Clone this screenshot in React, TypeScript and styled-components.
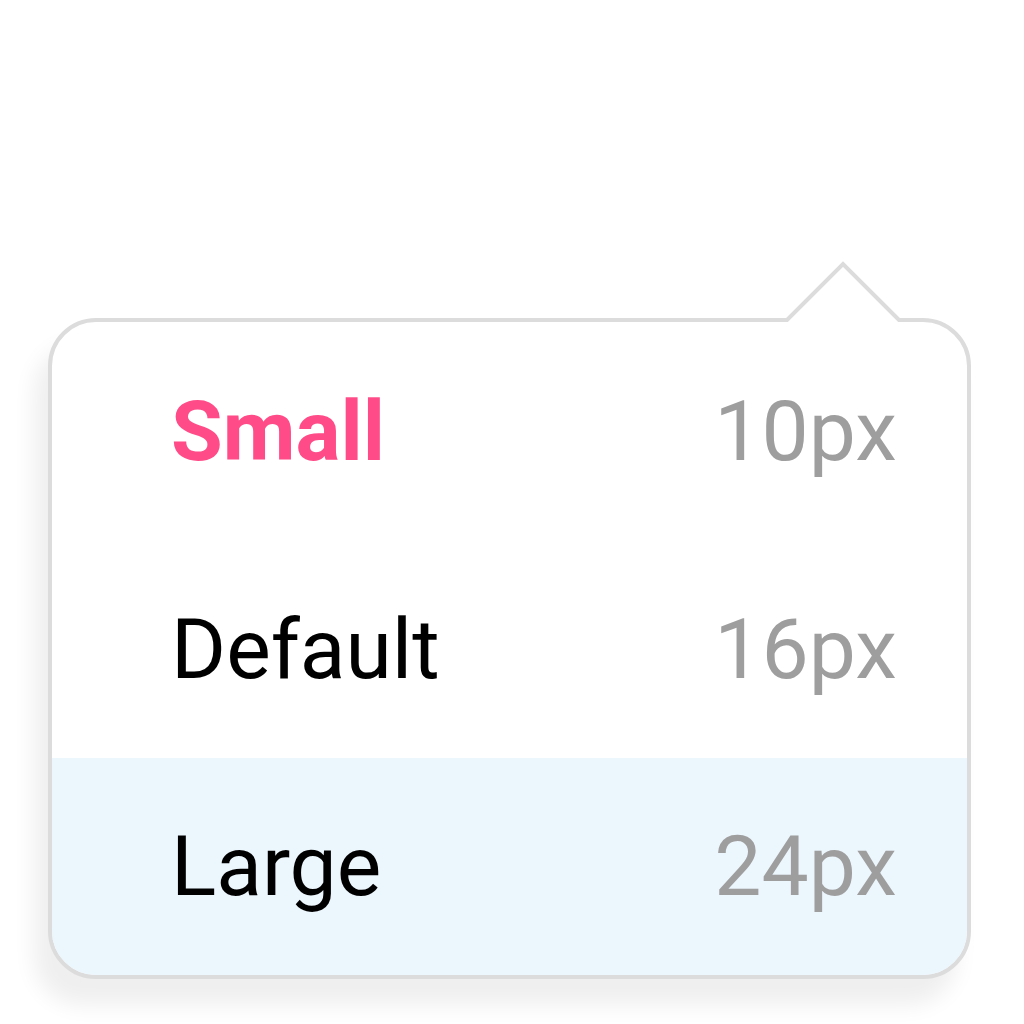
import React from "react";
import styled, { createGlobalStyle } from "styled-components";

const Global = createGlobalStyle`
  html, body { margin: 0; padding: 0; background: #ffffff; }
  body { font-family: Roboto, "Liberation Sans", sans-serif; }
`;

const Page = styled.div`
  width: 1024px;
  height: 1024px;
  padding-top: 318px;
  padding-left: 48px;
  box-sizing: border-box;
`;

const Anchor = styled.div`
  position: relative;
  width: 923px;
`;

const Menu = styled.ul`
  list-style: none;
  margin: 0;
  padding: 0;
  box-sizing: border-box;
  width: 923px;
  height: 661px;
  border: 4px solid #dcdcdc;
  border-radius: 48px;
  overflow: hidden;
  background: #ffffff;
  display: grid;
  grid-template-rows: 218px 218px 1fr;
  box-shadow: -14px 26px 22px rgba(0, 0, 0, 0.065);
`;

const Item = styled.li<{ $highlight?: boolean }>`
  display: flex;
  align-items: center;
  justify-content: space-between;
  padding: 0 70px 0 119px;
  background: ${(p) => (p.$highlight ? "#ecf6fd" : "transparent")};
`;

const Label = styled.span<{ $active?: boolean }>`
  font-family: Roboto, "Liberation Sans", sans-serif;
  font-size: 84px;
  font-weight: ${(p) => (p.$active ? 700 : 400)};
  color: ${(p) => (p.$active ? "#ff4b87" : "#000000")};
`;

const Size = styled.span`
  font-family: Roboto, "Liberation Sans", sans-serif;
  font-size: 84px;
  font-weight: 400;
  color: #9e9e9e;
`;

const Caret = styled.svg`
  position: absolute;
  left: 735px;
  top: -56px;
  width: 120px;
  height: 66px;
  overflow: visible;
`;

const items = [
  { label: "Small", size: "10px", active: true, highlight: false },
  { label: "Default", size: "16px", active: false, highlight: false },
  { label: "Large", size: "24px", active: false, highlight: true },
];

export default function App() {
  return (
    <>
      <Global />
      <Page>
        <Anchor>
          <Menu>
            {items.map((it) => (
              <Item key={it.label} $highlight={it.highlight}>
                <Label $active={it.active}>{it.label}</Label>
                <Size>{it.size}</Size>
              </Item>
            ))}
          </Menu>
          <Caret viewBox="0 0 120 66">
            <polygon points="4,58 60,2 116,58 116,66 4,66" fill="#ffffff" />
            <polyline
              points="0,58 4,58 60,2 116,58 120,58"
              fill="none"
              stroke="#dcdcdc"
              strokeWidth="4"
              strokeLinejoin="miter"
            />
          </Caret>
        </Anchor>
      </Page>
    </>
  );
}
